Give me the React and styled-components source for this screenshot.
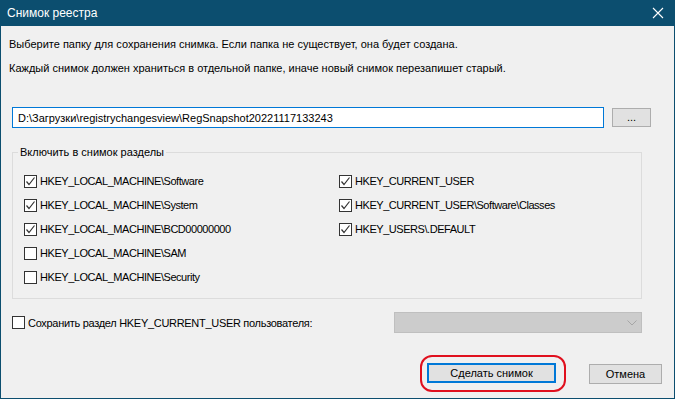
import styled, { createGlobalStyle } from "styled-components";

const GlobalStyle = createGlobalStyle`
  html, body {
    margin: 0;
    padding: 0;
    background: #f0f0f0;
  }
  * {
    box-sizing: border-box;
  }
`;

const leftKeys = [
  { label: "HKEY_LOCAL_MACHINE\\Software", checked: true },
  { label: "HKEY_LOCAL_MACHINE\\System", checked: true },
  { label: "HKEY_LOCAL_MACHINE\\BCD00000000", checked: true },
  { label: "HKEY_LOCAL_MACHINE\\SAM", checked: false },
  { label: "HKEY_LOCAL_MACHINE\\Security", checked: false },
];

const rightKeys = [
  { label: "HKEY_CURRENT_USER", checked: true },
  { label: "HKEY_CURRENT_USER\\Software\\Classes", checked: true },
  { label: "HKEY_USERS\\.DEFAULT", checked: true },
];

function CheckBox({ checked }) {
  return (
    <Box>
      {checked && (
        <svg width="11" height="11" viewBox="0 0 11 11">
          <path d="M1.5 5.5 L4 8.5 L9.5 1.5" fill="none" stroke="#333" strokeWidth="1.2" />
        </svg>
      )}
    </Box>
  );
}

function KeyOption({ label, checked }) {
  return (
    <Option>
      <CheckBox checked={checked} />
      <KeyLabel>{label}</KeyLabel>
    </Option>
  );
}

export default function App() {
  return (
    <>
      <GlobalStyle />
      <Window>
        <TitleBar>
          <Title>Снимок реестра</Title>
          <svg width="12" height="12" viewBox="0 0 12 12">
            <path d="M1 1 L11 11 M11 1 L1 11" stroke="#fff" strokeWidth="1.1" />
          </svg>
        </TitleBar>
        <Body>
          <Message>Выберите папку для сохранения снимка. Если папка не существует, она будет создана.</Message>
          <Message>Каждый снимок должен храниться в отдельной папке, иначе новый снимок перезапишет старый.</Message>

          <PathRow>
            <PathInput defaultValue="D:\Загрузки\registrychangesview\RegSnapshot20221117133243" />
            <BrowseButton>...</BrowseButton>
          </PathRow>

          <Group>
            <Legend>Включить в снимок разделы</Legend>
            <Columns>
              <Column>
                {leftKeys.map((k) => (
                  <KeyOption key={k.label} {...k} />
                ))}
              </Column>
              <Column>
                {rightKeys.map((k) => (
                  <KeyOption key={k.label} {...k} />
                ))}
              </Column>
            </Columns>
          </Group>

          <UserRow>
            <UserOption>
              <CheckBox checked={false} />
              <KeyLabel $tight={0.3}>Сохранить раздел HKEY_CURRENT_USER пользователя:</KeyLabel>
            </UserOption>
            <Combo>
              <svg width="10" height="6" viewBox="0 0 10 6">
                <path d="M0.5 0.5 L5 5 L9.5 0.5" fill="none" stroke="#a6a6a6" strokeWidth="1" />
              </svg>
            </Combo>
          </UserRow>

          <ButtonRow>
            <Highlight>
              <Button $default>Сделать снимок</Button>
            </Highlight>
            <Button $width={73}>Отмена</Button>
          </ButtonRow>
        </Body>
      </Window>
    </>
  );
}

const Window = styled.div`
  width: 675px;
  height: 399px;
  display: flex;
  flex-direction: column;
  background: #f0f0f0;
  border: 1px solid #0c4e6f;
  border-top: none;
  font-family: "Liberation Sans", Arial, sans-serif;
  font-size: 11px;
  color: #000;
`;

const TitleBar = styled.div`
  height: 26px;
  flex-shrink: 0;
  margin: 0 -1px;
  background: #0c4e6f;
  display: flex;
  align-items: center;
  justify-content: space-between;
  padding: 0 11px 0 7px;
`;

const Title = styled.div`
  color: #fff;
  font-size: 12px;
`;

const Body = styled.div`
  display: flex;
  flex-direction: column;
  padding: 10px 12px 0 11px;
`;

const Message = styled.div`
  height: 16px;
  line-height: 16px;
  margin-left: -3px;
  margin-bottom: 8px;
  white-space: nowrap;
`;

const PathRow = styled.div`
  display: flex;
  align-items: center;
  gap: 8px;
  margin-top: 23px;
`;

const PathInput = styled.input`
  width: 592px;
  height: 21px;
  border: 1px solid #0078d7;
  background: #fff;
  padding: 0 5px;
  font: inherit;
  color: #000;
  outline: none;
`;

const BrowseButton = styled.button`
  width: 39px;
  height: 19px;
  background: #e1e1e1;
  border: 1px solid #adadad;
  font: inherit;
  color: #000;
  padding: 0;
  line-height: 17px;
`;

const Group = styled.fieldset`
  width: 630px;
  margin: 16px 0 0 0;
  border: 1px solid #dcdcdc;
  padding: 9px 11px 9px 11px;
  min-width: 0;
`;

const Legend = styled.legend`
  line-height: 16px;
  padding: 0 2px;
  margin-left: -6px;
`;

const Columns = styled.div`
  display: grid;
  grid-template-columns: 315px 1fr;
`;

const Column = styled.div`
  display: flex;
  flex-direction: column;
`;

const Option = styled.div`
  height: 24px;
  display: flex;
  align-items: center;
  gap: 3px;
  white-space: nowrap;
`;

const KeyLabel = styled.span`
  letter-spacing: -${(p) => (p.$tight ? p.$tight : 0.45)}px;
`;

const Box = styled.span`
  width: 13px;
  height: 13px;
  flex-shrink: 0;
  border: 1px solid #333;
  background: #fff;
  display: flex;
  align-items: center;
  justify-content: center;
`;

const UserRow = styled.div`
  display: flex;
  align-items: center;
  justify-content: space-between;
  width: 630px;
  margin-top: 13px;
`;

const UserOption = styled.div`
  display: flex;
  align-items: center;
  gap: 3px;
  white-space: nowrap;
`;

const Combo = styled.div`
  width: 248px;
  height: 21px;
  background: #cccccc;
  border: 1px solid #bfbfbf;
  display: flex;
  align-items: center;
  justify-content: flex-end;
  padding-right: 4px;
`;

const ButtonRow = styled.div`
  display: flex;
  align-items: center;
  justify-content: flex-end;
  gap: 23px;
  margin-top: 22px;
`;

const Highlight = styled.div`
  border: 2px solid #e0101e;
  border-radius: 12px;
  padding: 6px 8px 7px 5px;
  display: flex;
`;

const Button = styled.button`
  width: ${(p) => (p.$width ? p.$width : 129)}px;
  height: 20px;
  background: #e1e1e1;
  border: ${(p) => (p.$default ? "2px solid #0078d7" : "1px solid #adadad")};
  font: inherit;
  color: #000;
  padding: 0;
`;
